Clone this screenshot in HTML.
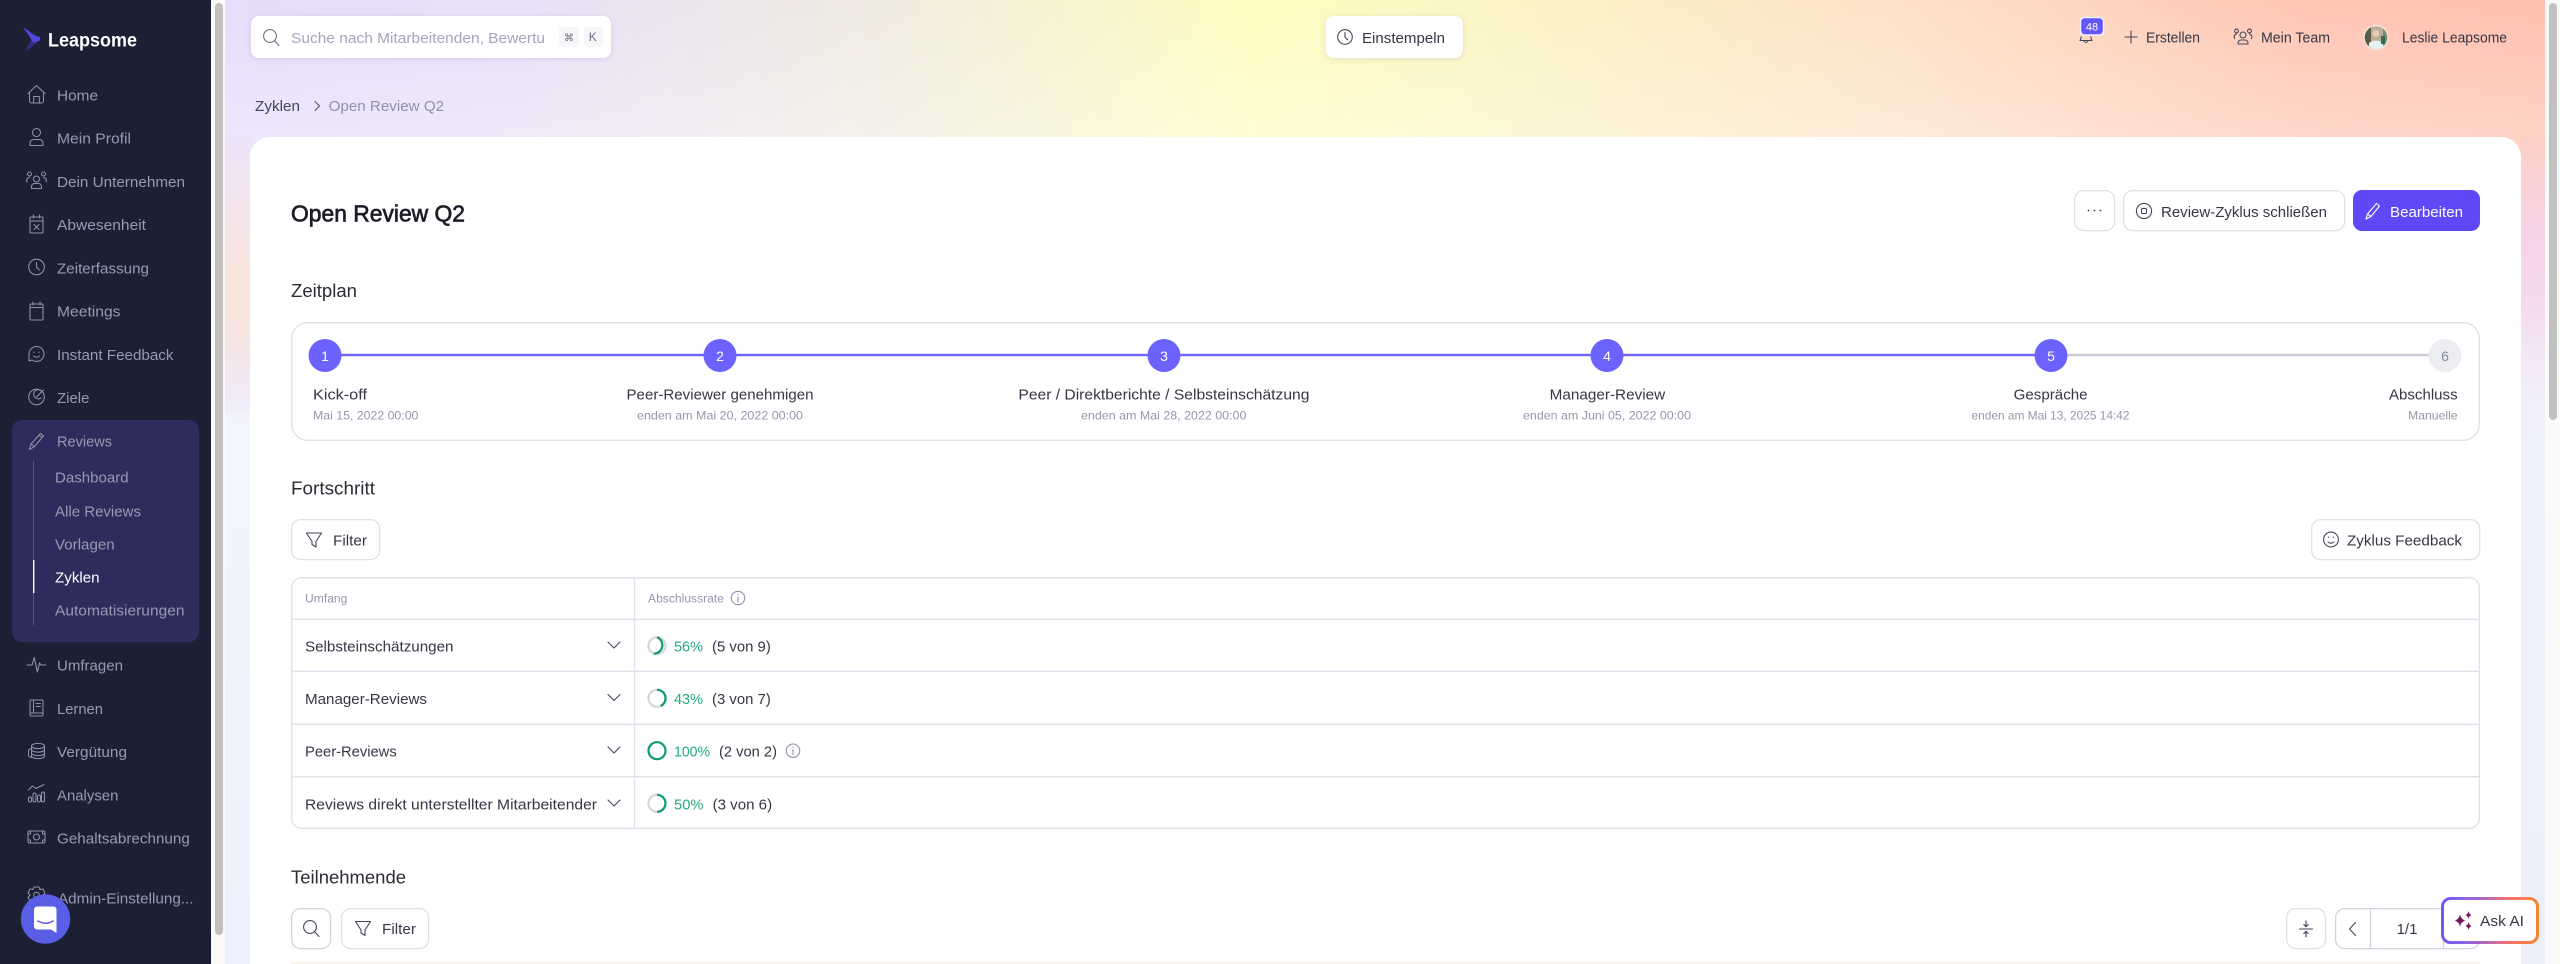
<!DOCTYPE html>
<html lang="de">
<head>
<meta charset="utf-8">
<title>Open Review Q2</title>
<style>
html,body{margin:0;padding:0;width:2560px;height:964px;overflow:hidden;background:#fff}
#band,#ls,#rs,#sb,#lt,#rt,#card{position:absolute}
#sb{left:0;top:0;width:211px;height:964px;background:#1b2035}
#lt{left:211px;top:0;width:14px;height:964px;background:#fafafa}
#rt{left:2545px;top:0;width:15px;height:964px;background:#fafafa}
#band{left:225px;top:0;width:2320px;height:170px;background:linear-gradient(180deg,rgba(255,255,255,0),rgba(255,255,255,.3) 137px,rgba(255,255,255,.3)),linear-gradient(90deg,#e6dcfb 0,#e9e0f8 300px,#f1ecdf 675px,#fffcc0 1025px,#fcf6c4 1240px,#fde2c8 1675px,#ffc6b4 2075px,#ffc0ae 2320px)}
#ls{left:225px;top:137px;width:25px;height:827px;background:linear-gradient(180deg,#ede3f9 0,#f1e4f1 45px,#f8e5dc 140px,#f7e5df 190px,#f2e8f1 240px,#f0ebf8 265px,#f3f5fe 285px,#f1f3fd 500px,#eef0fd 827px)}
#rs{left:2521px;top:137px;width:24px;height:827px;background:linear-gradient(180deg,#fcd0c6 0,#fad2d6 50px,#f6d4ea 100px,#f4d8f0 160px,#f4e5f7 215px,#f1effc 265px,#eff1fd 310px,#eeeffc 827px)}
#card{left:250px;top:137px;width:2271px;height:827px;background:#fff;border-radius:20px 20px 0 0}
svg{position:absolute;left:0;top:0}
text{font-family:"Liberation Sans",sans-serif;font-size:15px;fill:#363645}
.n{fill:#989ab3}
.w{fill:#fff}
.s{font-size:12px;fill:#9496ac}
.h{font-size:18px;fill:#2c2c36}
.g{fill:#22ab7c}
.t{font-size:11.5px;fill:#9496ae}
.i{fill:none;stroke:#9092ac;stroke-width:1.05;stroke-linecap:round;stroke-linejoin:round}
.d{fill:none;stroke:#45455a;stroke-width:1.1;stroke-linecap:round;stroke-linejoin:round}
.b{fill:#fff;stroke:#e0e0ea;stroke-width:1.3}
.r{fill:none;stroke:#d5d6e2;stroke-width:2.2}
.p{fill:none;stroke:#0f9d6e;stroke-width:2.2;stroke-linecap:butt}
.ln{stroke:#e0e0ea;stroke-width:1.3}
.c{fill:#6c63fe}
.m{text-anchor:middle;font-size:14px;fill:#fff}
</style>
</head>
<body>
<div id="sb"></div><div id="lt"></div><div id="rt"></div>
<div id="band"></div><div id="ls"></div><div id="rs"></div><div id="card"></div>
<svg width="2560" height="964" viewBox="0 0 2560 964" xmlns="http://www.w3.org/2000/svg">
<defs>
<linearGradient id="ai" gradientUnits="userSpaceOnUse" x1="2441" y1="0" x2="2539" y2="0">
<stop offset="0" stop-color="#6b5cf5"/><stop offset=".35" stop-color="#9a66d8"/><stop offset=".7" stop-color="#f7706f"/><stop offset="1" stop-color="#f5862c"/>
</linearGradient>
</defs>

<!-- scrollbars -->
<rect x="215" y="3" width="8" height="932" rx="4" fill="#c1c1c1"/>
<rect x="2549" y="3" width="8" height="417" rx="4" fill="#c1c1c1"/>

<!-- logo -->
<polygon points="23,27 36,36 40.5,37 39.5,41 33,43 31,39" fill="#5047dc"/>
<polygon points="33,43 39,41 34,45 25,52 31,40" fill="#2f2f86"/>
<text x="48" y="46.5" textLength="89" lengthAdjust="spacingAndGlyphs" style="font-size:19px;font-weight:700;fill:#fff">Leapsome</text>

<!-- reviews group -->
<rect x="12" y="420" width="187" height="222" rx="10" fill="#2d2c5d"/>
<rect x="33" y="461" width="1" height="164" fill="#55547f"/>
<rect x="33" y="560" width="1.4" height="33" fill="#fff"/>

<!-- nav text -->
<text class="n" x="57" y="100.5" textLength="41" lengthAdjust="spacingAndGlyphs">Home</text>
<text class="n" x="57" y="143.5" textLength="74" lengthAdjust="spacingAndGlyphs">Mein Profil</text>
<text class="n" x="57" y="187" textLength="128" lengthAdjust="spacingAndGlyphs">Dein Unternehmen</text>
<text class="n" x="57" y="230" textLength="89" lengthAdjust="spacingAndGlyphs">Abwesenheit</text>
<text class="n" x="57" y="273.5" textLength="92" lengthAdjust="spacingAndGlyphs">Zeiterfassung</text>
<text class="n" x="57" y="316.5" textLength="63.5" lengthAdjust="spacingAndGlyphs">Meetings</text>
<text class="n" x="57" y="360" textLength="116.5" lengthAdjust="spacingAndGlyphs">Instant Feedback</text>
<text class="n" x="57" y="403" textLength="32.4" lengthAdjust="spacingAndGlyphs">Ziele</text>
<text class="n" x="57" y="446.5" textLength="55" lengthAdjust="spacingAndGlyphs">Reviews</text>
<text class="n" x="55" y="482.5" textLength="73.6" lengthAdjust="spacingAndGlyphs">Dashboard</text>
<text class="n" x="55" y="516.5" textLength="86" lengthAdjust="spacingAndGlyphs">Alle Reviews</text>
<text class="n" x="55" y="549.5" textLength="59.7" lengthAdjust="spacingAndGlyphs">Vorlagen</text>
<text class="w" x="55" y="582.5" textLength="44.6" lengthAdjust="spacingAndGlyphs">Zyklen</text>
<text class="n" x="55" y="615.5" textLength="129.5" lengthAdjust="spacingAndGlyphs">Automatisierungen</text>
<text class="n" x="57" y="670.5" textLength="66" lengthAdjust="spacingAndGlyphs">Umfragen</text>
<text class="n" x="57" y="714" textLength="46" lengthAdjust="spacingAndGlyphs">Lernen</text>
<text class="n" x="57" y="757" textLength="70" lengthAdjust="spacingAndGlyphs">Vergütung</text>
<text class="n" x="57" y="800.5" textLength="61.4" lengthAdjust="spacingAndGlyphs">Analysen</text>
<text class="n" x="57" y="843.5" textLength="132.8" lengthAdjust="spacingAndGlyphs">Gehaltsabrechnung</text>
<text class="n" x="58" y="903.5" textLength="135.5" lengthAdjust="spacingAndGlyphs">Admin-Einstellung...</text>

<!-- nav icons -->
<g class="i">
<g transform="translate(36.5,94)"><path d="M-8.5 -.5L0 -8.5L8.5 -.5M-7 -2V7a2 2 0 0 0 2 2H5a2 2 0 0 0 2-2V-2M-2.8 9V2.5H2.8V9"/></g>
<g transform="translate(36.5,137)"><circle cx="0" cy="-4.5" r="4"/><path d="M-6.5 8.5V6a3.5 3.5 0 0 1 3.5-3.5H3A3.5 3.5 0 0 1 6.5 6V8.5Z"/></g>
<g transform="translate(36.5,180)"><circle cx="0" cy="-1" r="3"/><circle cx="-7" cy="-6" r="2"/><circle cx="7" cy="-6" r="2"/><path d="M-5 8.5V6.5a3 3 0 0 1 3-3H2a3 3 0 0 1 3 3V8.5ZM-9.5 2A3 3 0 0 1 -7 -2.5M9.5 2A3 3 0 0 0 7 -2.5"/></g>
<g transform="translate(36.5,224)"><rect x="-6.5" y="-7" width="13" height="16" rx="1"/><path d="M-6.5 -3H6.5M-3 -9V-6M3 -9V-6M-2.5 .5L2.5 5.5M2.5 .5L-2.5 5.5"/></g>
<g transform="translate(36.5,267)"><circle r="7.8"/><path d="M0 -4.5V0L2.8 3"/></g>
<g transform="translate(36.5,311)"><rect x="-6.5" y="-7" width="13" height="16" rx="1"/><path d="M-6.5 -3.5H6.5M-3.5 -9V-6M3.5 -9V-6"/></g>
<g transform="translate(36.5,354)"><path d="M-7.5 7V0a7.5 7.5 0 1 1 3 6Z"/><path d="M-3 2q3 2.5 6 0M-2.5 -2v.5M2.5 -2v.5"/></g>
<g transform="translate(36.5,397)"><circle r="7.8"/><path d="M5 -6A4.6 4.6 0 1 0 4.6 .8"/><path d="M0 0L7 -7"/></g>
<g transform="translate(36.5,441)"><path d="M-7 8.5L-5.5 3L4 -7.5L7 -5L-2 5.5ZM-5.5 3L-2 5.5M2.5 -6L5.5 -3.5"/></g>
<g transform="translate(36.5,665)"><path d="M-9.5 0H-4.5L-2.2 -7.5L.8 7L3 -2L4.5 0H9.5"/></g>
<g transform="translate(36.5,708)"><rect x="-6.5" y="-8" width="13" height="16" rx="1"/><path d="M-6.5 5H6.5M-3 -8V5M-.5 -4.5H4M-.5 -1.5H4"/></g>
<g transform="translate(36.5,751)"><ellipse cx="1.5" cy="-5" rx="6.5" ry="2.6"/><path d="M-5 -5V5c0 1.5 2.8 2.6 6.5 2.6S8 6.5 8 5V-5M-5 -1.5c0 1.5 2.8 2.6 6.5 2.6S8 0 8 -1.5M-5 2c0 1.5 2.8 2.6 6.5 2.6S8 3.5 8 2"/><path d="M-5 -2.5C-7 -2 -8 -1 -8 0V4c0 1.2 1.3 2 3 2.5"/></g>
<g transform="translate(36.5,794)"><path d="M-8 -4L-4 -8L-.5 -5.5L7.5 -9.5"/><rect x="-8" y="3" width="3" height="5" rx="1.5"/><rect x="-3.5" y="-1" width="3" height="9" rx="1.5"/><rect x="1" y="1" width="3" height="7" rx="1.5"/><rect x="5" y="-2" width="3" height="10" rx="1.5"/></g>
<g transform="translate(36.5,837)"><rect x="-8.5" y="-6" width="17" height="12" rx="1.5"/><circle r="3"/><path d="M-8.5 -3H-6V-6M6 -6V-3H8.5M-8.5 3H-6V6M6 6V3H8.5"/></g>
<g transform="translate(36.5,895)"><circle r="2.8"/><path d="M-2.5 -8H2.5L3.5 -5.5L6.5 -6L8.5 -2L6.5 0L8.5 2.5L6.5 6L3.5 5.5L2.5 8H-2.5L-3.5 5.5L-6.5 6L-8.5 2.5L-6.5 0L-8.5 -2L-6.5 -6L-3.5 -5.5Z"/></g>
</g>

<!-- chat launcher -->
<circle cx="45.5" cy="919" r="24.7" fill="#5a5de6"/>
<path d="M37 906.5H53.5a3 3 0 0 1 3 3V933L51 929.5H37a3 3 0 0 1-3-3V909.5a3 3 0 0 1 3-3Z" fill="#fff"/>
<path d="M38 921Q45.5 925.5 53 921" fill="none" stroke="#5a5de6" stroke-width="1.6" stroke-linecap="round"/>

<!-- search -->
<rect x="251" y="16" width="360" height="42" rx="8" fill="#fff" style="filter:drop-shadow(0 1px 3px rgba(90,80,140,.16))"/>
<g class="d" style="stroke:#6f7088"><circle cx="270" cy="36" r="6.4"/><path d="M274.6 40.8L279 45.5"/></g>
<text x="291" y="43" textLength="254" lengthAdjust="spacingAndGlyphs" style="fill:#a3a5bd">Suche nach Mitarbeitenden, Bewertu</text>
<rect x="559" y="27" width="20" height="20" rx="3" fill="#f6f6f8"/>
<rect x="584" y="27" width="19" height="20" rx="3" fill="#f6f6f8"/>
<text x="569" y="41" text-anchor="middle" style="font-family:'DejaVu Sans',sans-serif;font-size:10px;fill:#6d6e80">⌘</text>
<text x="592.7" y="41" text-anchor="middle" style="font-size:12px;fill:#6d6e80">K</text>

<!-- einstempeln -->
<rect x="1325.5" y="16" width="137.5" height="42" rx="8" fill="#fff" style="filter:drop-shadow(0 1px 3px rgba(90,80,140,.16))"/>
<g class="d"><circle cx="1345" cy="37" r="7.3"/><path d="M1345 32.5V37L1347.8 39.8"/></g>
<text x="1362" y="43" textLength="83" lengthAdjust="spacingAndGlyphs">Einstempeln</text>

<!-- top right -->
<g class="d"><path d="M2081 36.5c0 0 .5 1 -1 3.5H2092c-1.5 -2.5 -1 -3.5 -1 -3.5M2084 40.5q2 3 4 0" transform="translate(0,.5)"/></g>
<rect x="2080.5" y="17.5" width="23" height="17.5" rx="4" fill="#6457f9" stroke="#eef0ff" stroke-width="1.5"/>
<text x="2092" y="30.5" text-anchor="middle" style="font-size:11px;fill:#fff">48</text>
<g class="d"><path d="M2125 37H2137M2131 31V43"/></g>
<text x="2146" y="42.5" textLength="54" lengthAdjust="spacingAndGlyphs">Erstellen</text>
<g class="d" transform="translate(2243,37)"><circle cx="0" cy="-2" r="3"/><circle cx="-6.5" cy="-6" r="1.9"/><circle cx="6.5" cy="-6" r="1.9"/><path d="M-5 7V6a3 3 0 0 1 3-3H2a3 3 0 0 1 3 3V7ZM-8.5 1.5A3 3 0 0 1 -6.5 -3M8.5 1.5A3 3 0 0 0 6.5 -3"/></g>
<text x="2261" y="42.5" textLength="69" lengthAdjust="spacingAndGlyphs">Mein Team</text>
<circle cx="2376" cy="37.5" r="12.5" fill="#f2efe8"/>
<clipPath id="av"><circle cx="2376" cy="37.5" r="11.3"/></clipPath>
<g clip-path="url(#av)">
<rect x="2364" y="26" width="24" height="24" fill="#b9ad96"/>
<rect x="2364" y="26" width="7" height="24" fill="#5b5a48"/>
<rect x="2383" y="26" width="6" height="24" fill="#7c8a6a"/>
<circle cx="2376" cy="33.5" r="3.4" fill="#e7cdb8"/>
<path d="M2369 50V43q7-5 14 0V50Z" fill="#e6f1f1"/>
<rect x="2381" y="36" width="4" height="8" fill="#2f6d58"/>
</g>
<text x="2402" y="42.5" textLength="105" lengthAdjust="spacingAndGlyphs">Leslie Leapsome</text>

<!-- breadcrumb -->
<text x="255" y="111" textLength="45" lengthAdjust="spacingAndGlyphs" style="fill:#46465a">Zyklen</text>
<path d="M315 101.5L319.5 106L315 110.5" class="d" style="stroke:#55566a"/>
<text x="328.6" y="111" textLength="115.5" lengthAdjust="spacingAndGlyphs" style="fill:#8f91a9">Open Review Q2</text>

<!-- title -->
<text x="291" y="221.5" textLength="174" lengthAdjust="spacingAndGlyphs" style="font-size:23px;fill:#1d1d28;stroke:#1d1d28;stroke-width:.7">Open Review Q2</text>

<!-- action buttons -->
<rect class="b" x="2074.6" y="190.6" width="40" height="40" rx="9"/>
<g fill="#3a3a4e"><circle cx="2088.5" cy="210.5" r=".9"/><circle cx="2094.5" cy="210.5" r=".9"/><circle cx="2100.5" cy="210.5" r=".9"/></g>
<rect class="b" x="2123.6" y="190.6" width="221" height="40" rx="9"/>
<g class="d"><circle cx="2144" cy="211" r="7.6"/><rect x="2141.5" y="208.5" width="5" height="5" rx="1.2"/></g>
<text x="2161" y="217" textLength="166" lengthAdjust="spacingAndGlyphs">Review-Zyklus schließen</text>
<rect x="2353" y="190" width="127" height="41" rx="9" fill="#6148f6"/>
<g class="d" style="stroke:#fff" transform="translate(2373,211)"><path d="M-7 8L-5.5 3L3.5 -7.5L6.5 -5L-2 5.5ZM-5.5 3L-2 5.5"/></g>
<text class="w" x="2390" y="217" textLength="73" lengthAdjust="spacingAndGlyphs">Bearbeiten</text>

<!-- section titles -->
<text class="h" x="291" y="297" textLength="66" lengthAdjust="spacingAndGlyphs">Zeitplan</text>
<text class="h" x="291" y="494.5" textLength="84" lengthAdjust="spacingAndGlyphs">Fortschritt</text>
<text class="h" x="291" y="883.3" textLength="115" lengthAdjust="spacingAndGlyphs">Teilnehmende</text>

<!-- timeline -->
<rect x="291.7" y="322.7" width="2187.6" height="117.6" rx="16" fill="#fff" stroke="#e0e0ea" stroke-width="1.4"/>
<rect x="325" y="353.8" width="1726" height="2.4" fill="#6c63fe"/>
<rect x="2051" y="353.8" width="394" height="2.4" fill="#c9cad8"/>
<circle class="c" cx="325" cy="355.5" r="16.5"/><circle class="c" cx="720" cy="355.5" r="16.5"/><circle class="c" cx="1164" cy="355.5" r="16.5"/><circle class="c" cx="1607" cy="355.5" r="16.5"/><circle class="c" cx="2051" cy="355.5" r="16.5"/><circle cx="2445" cy="355.5" r="16.5" fill="#ecedf2"/>
<text class="m" x="325" y="361">1</text><text class="m" x="720" y="361">2</text><text class="m" x="1164" y="361">3</text><text class="m" x="1607" y="361">4</text><text class="m" x="2051" y="361">5</text><text class="m" x="2445" y="361" style="fill:#85879e">6</text>
<text x="313" y="399.5" textLength="54" lengthAdjust="spacingAndGlyphs">Kick-off</text>
<text x="626.5" y="399.5" textLength="187" lengthAdjust="spacingAndGlyphs">Peer-Reviewer genehmigen</text>
<text x="1018.4" y="399.5" textLength="291" lengthAdjust="spacingAndGlyphs">Peer / Direktberichte / Selbsteinschätzung</text>
<text x="1549.6" y="399.5" textLength="115.6" lengthAdjust="spacingAndGlyphs">Manager-Review</text>
<text x="2013.6" y="399.5" textLength="74" lengthAdjust="spacingAndGlyphs">Gespräche</text>
<text x="2389" y="399.5" textLength="68.6" lengthAdjust="spacingAndGlyphs">Abschluss</text>
<text class="s" x="313" y="419.5" textLength="105.4" lengthAdjust="spacingAndGlyphs">Mai 15, 2022 00:00</text>
<text class="s" x="637" y="419.5" textLength="166" lengthAdjust="spacingAndGlyphs">enden am Mai 20, 2022 00:00</text>
<text class="s" x="1081" y="419.5" textLength="165.4" lengthAdjust="spacingAndGlyphs">enden am Mai 28, 2022 00:00</text>
<text class="s" x="1523" y="419.5" textLength="168" lengthAdjust="spacingAndGlyphs">enden am Juni 05, 2022 00:00</text>
<text class="s" x="1971.5" y="419.5" textLength="158" lengthAdjust="spacingAndGlyphs">enden am Mai 13, 2025 14:42</text>
<text class="s" x="2408" y="419.5" textLength="49.6" lengthAdjust="spacingAndGlyphs">Manuelle</text>

<!-- filter row -->
<rect class="b" x="291.6" y="519.6" width="88" height="40" rx="9"/>
<path class="d" d="M306.5 533H321.5L316 541.5V547L312 544.5V541.5Z"/>
<text x="333" y="545.5" textLength="34" lengthAdjust="spacingAndGlyphs">Filter</text>
<rect class="b" x="2311.6" y="519.6" width="168" height="40" rx="9"/>
<g class="d"><circle cx="2331" cy="539.5" r="7.4"/><path d="M2328 542q3 2.4 6 0M2328.5 537v.4M2333.5 537v.4"/></g>
<text x="2347" y="545.3" textLength="115" lengthAdjust="spacingAndGlyphs">Zyklus Feedback</text>

<!-- table -->
<rect class="b" x="291.7" y="577.7" width="2187.6" height="250.6" rx="10" style="fill:#fff"/>
<path class="ln" d="M292 619.3H2479M292 671.3H2479M292 724.3H2479M292 776.8H2479M634.5 578V828"/>
<text class="t" x="305" y="602.7" textLength="42.4" lengthAdjust="spacingAndGlyphs">Umfang</text>
<text class="t" x="648" y="602.7" textLength="76" lengthAdjust="spacingAndGlyphs">Abschlussrate</text>
<g fill="none" stroke="#8f91ab" stroke-width="1.1" stroke-linecap="round"><circle cx="738" cy="598" r="6.7"/><path d="M738 597V602M738 594.4v.3"/></g>

<text x="305" y="651.7" textLength="148.5" lengthAdjust="spacingAndGlyphs">Selbsteinschätzungen</text>
<text x="305" y="704" textLength="122" lengthAdjust="spacingAndGlyphs">Manager-Reviews</text>
<text x="305" y="756.7" textLength="91.7" lengthAdjust="spacingAndGlyphs">Peer-Reviews</text>
<text x="305" y="809.3" textLength="292" lengthAdjust="spacingAndGlyphs">Reviews direkt unterstellter Mitarbeitender</text>
<g class="d"><path d="M608 642L614 648L620 642M608 694.5L614 700.5L620 694.5M608 747L614 753L620 747M608 800L614 806L620 800"/></g>

<!-- rings -->
<circle class="r" cx="657" cy="645.7" r="8.5"/><path class="p" d="M657 637.2A8.5 8.5 0 0 1 653.9 653.6"/>
<circle class="r" cx="657" cy="698.3" r="8.5"/><path class="p" d="M657 689.8A8.5 8.5 0 0 1 660.7 706"/>
<circle cx="657" cy="750.7" r="8.5" fill="none" stroke="#0f9d6e" stroke-width="2.2"/>
<circle class="r" cx="657" cy="803.3" r="8.5"/><path class="p" d="M657 794.8A8.5 8.5 0 0 1 657 811.8"/>

<text class="g" x="674" y="651.7" textLength="29" lengthAdjust="spacingAndGlyphs">56%</text>
<text x="712" y="651.7" textLength="58.8" lengthAdjust="spacingAndGlyphs">(5 von 9)</text>
<text class="g" x="674" y="704" textLength="29" lengthAdjust="spacingAndGlyphs">43%</text>
<text x="712" y="704" textLength="58.8" lengthAdjust="spacingAndGlyphs">(3 von 7)</text>
<text class="g" x="674" y="756.7" textLength="36" lengthAdjust="spacingAndGlyphs">100%</text>
<text x="719" y="756.7" textLength="58" lengthAdjust="spacingAndGlyphs">(2 von 2)</text>
<g fill="none" stroke="#8f91ab" stroke-width="1.1" stroke-linecap="round"><circle cx="793" cy="750.7" r="6.7"/><path d="M793 749.7V754.7M793 747.1v.3"/></g>
<text class="g" x="674" y="809.3" textLength="29.5" lengthAdjust="spacingAndGlyphs">50%</text>
<text x="712.6" y="809.3" textLength="59.5" lengthAdjust="spacingAndGlyphs">(3 von 6)</text>

<!-- bottom toolbar -->
<rect x="291.6" y="908.6" width="39" height="40" rx="9" fill="#fff" stroke="#d2d3e0" stroke-width="1.3"/>
<g class="d"><circle cx="310" cy="927" r="6.4"/><path d="M314.6 931.8L319 936.5"/></g>
<rect class="b" x="341.6" y="908.6" width="87" height="40" rx="9"/>
<path class="d" d="M355.5 921.5H370.5L365 930V935.5L361 933V930Z"/>
<text x="382" y="934" textLength="34" lengthAdjust="spacingAndGlyphs">Filter</text>

<rect class="b" x="2286.6" y="908.6" width="39" height="40" rx="9"/>
<g class="d"><path d="M2299.5 929H2312.5M2306 921V926.5M2303.8 924.5L2306 926.7L2308.2 924.5M2306 937V931.5M2303.8 933.5L2306 931.3L2308.2 933.5"/></g>
<rect x="2335.6" y="908.6" width="144" height="40" rx="9" fill="#fff" stroke="#d2d3e0" stroke-width="1.3"/>
<path d="M2370.5 909V948M2443.5 909V948" stroke="#d2d3e0" stroke-width="1.2"/>
<path class="d" d="M2355.5 922.5L2349.5 929L2355.5 935.5"/>
<text x="2407" y="934" text-anchor="middle">1/1</text>
<rect x="291" y="962" width="2189" height="2" fill="#fdf3ea"/>

<!-- ask ai -->
<rect x="2442.5" y="898.5" width="95" height="44" rx="8" fill="#fff" stroke="url(#ai)" stroke-width="3"/>
<g fill="#7a1566">
<path d="M2460 914.5Q2461 919 2465 920.5Q2461 922 2460 926.5Q2459 922 2455 920.5Q2459 919 2460 914.5Z"/>
<path d="M2468.5 911Q2469 914 2471.5 915Q2469 916 2468.5 919Q2468 916 2465.5 915Q2468 914 2468.5 911Z"/>
<path d="M2468.5 922Q2469 925 2471.5 926Q2469 927 2468.5 930Q2468 927 2465.5 926Q2468 925 2468.5 922Z"/>
</g>
<text x="2480" y="926" textLength="44" lengthAdjust="spacingAndGlyphs">Ask AI</text>
</svg>
</body>
</html>
